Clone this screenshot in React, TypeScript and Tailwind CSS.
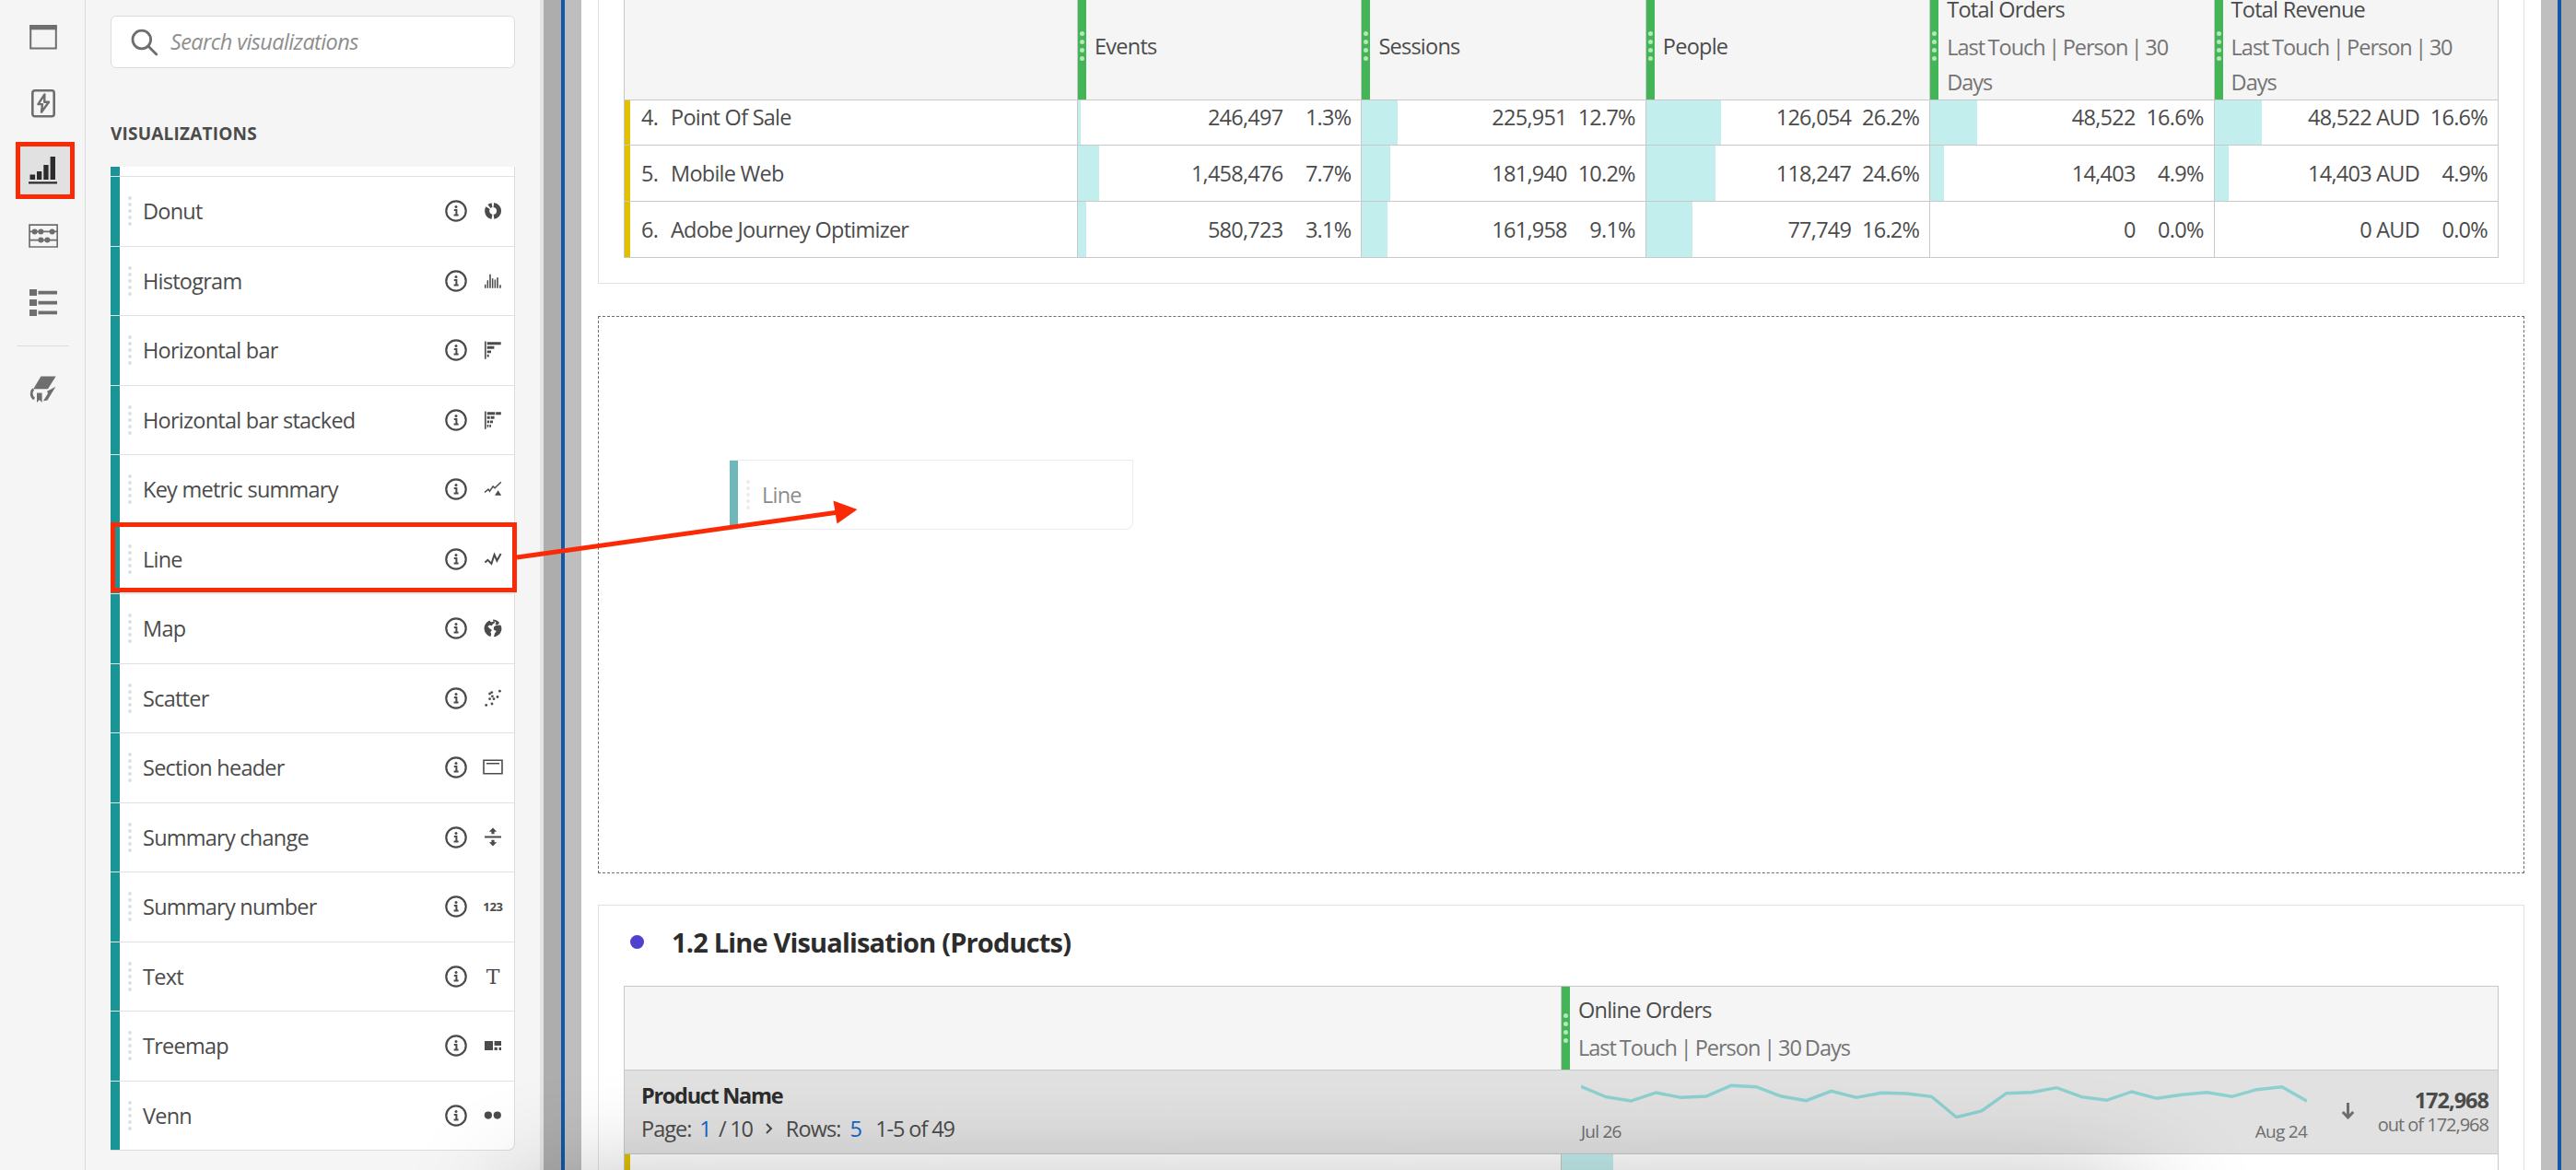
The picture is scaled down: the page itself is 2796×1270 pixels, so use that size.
import type { ReactNode } from 'react';

const InfoIcon = () => (
  <svg className="h-6 w-6 text-[#4b4b4b]" viewBox="0 0 24 24" fill="none" stroke="currentColor">
    <circle cx="12" cy="12" r="10.7" strokeWidth="2.2" />
    <circle cx="12" cy="7.4" r="1.5" fill="currentColor" stroke="none" />
    <path d="M9.8 11h2.6v5.4M9.6 16.6h5" strokeWidth="2" />
  </svg>
);

const VizIcon = ({ children }: { children: ReactNode }) => (
  <svg className="h-6 w-6 overflow-visible text-[#4b4b4b]" viewBox="0 0 24 24" fill="currentColor">
    {children}
  </svg>
);

const visualizations: { name: string; icon: ReactNode; active?: boolean }[] = [
  {
    name: 'Donut',
    icon: (
      <g fill="none" stroke="currentColor" strokeWidth="5">
        <path d="M12.9 5.6A6.4 6.4 0 0 1 13 18.3" />
        <path d="M11 18.3A6.4 6.4 0 0 1 6.6 8.6" />
        <path d="M8 7a6.4 6.4 0 0 1 3-1.4" />
      </g>
    ),
  },
  {
    name: 'Histogram',
    icon: (
      <path d="M3 15.8h1.5v4H3zM5.6 11.3h1.5v8.5H5.6zM8.2 4.8h1.6v15H8.2zM10.9 9.3h1.5v10.5h-1.5zM13.6 10.5h1.5v9.3h-1.5zM16.2 8.3h1.6v11.5h-1.6zM19.2 16.3h1.6v3.5h-1.6z" />
    ),
  },
  {
    name: 'Horizontal bar',
    icon: <path d="M3 2.5h1.6v19.3H3zM5.7 3.2h15v3h-15zM5.7 7.8h7.7v3H5.7zM5.7 12.5H10v2.7H5.7zM5.7 16.8h2v2.8h-2z" />,
  },
  {
    name: 'Horizontal bar stacked',
    icon: (
      <path d="M3 2.5h1.6v19.3H3zM5.7 3.2h8.6v3H5.7zM15.2 3.2h5.6v3h-5.6zM5.7 7.8h3v3h-3zM9.6 7.8h4v3h-4zM5.7 12.5h2.5v2.8H5.7zM9 12.5h3v2.8H9zM5.7 16.9h1.6v2.9H5.7zM8.3 16.9H10v2.9H8.3z" />
    ),
  },
  {
    name: 'Key metric summary',
    icon: (
      <>
        <path d="m3 15.5 4-3.4 1.5 2 3.6-5.2 2 1.8 6.7-6.4" fill="none" stroke="currentColor" strokeWidth="1.5" />
        <path d="m17.6 13.2 3.6 5.6H14z" />
      </>
    ),
  },
  {
    name: 'Line',
    icon: <path d="m3.4 15.6 3-2.8 4 4L13.6 7l2.8 6.6L20.6 6" fill="none" stroke="currentColor" strokeWidth="2" />,
    active: true,
  },
  {
    name: 'Map',
    icon: (
      <>
        <path d="M8.6 3.4C5 4.8 2.6 8.2 2.6 12c0 4.2 2.8 7.8 6.8 9l.8-2.6-.8-2.4 1.6-2-2.4-1.8-2.2-2.2 2-1.6 2.2.8 1.6-2 2-1.2-1-2-2 1.2-2-.4z" />
        <path d="M12 2.6c3 0 5.6 1.4 7.2 3.6l-2.2 2-2.4-.4.8-2.6-3.2-1.2zM20.4 8.4c1.4 2.8 1.4 5.6-.2 8.4-1.2 2-3 3.4-5.4 4.2l-1.8.2 1-3.6 1.8-2.6-3-1.4.2-3.2 2.6-1.6z" />
      </>
    ),
  },
  {
    name: 'Scatter',
    icon: (
      <>
        {[[4.7, 19.4], [11, 18], [8.6, 12.7], [13, 12.7], [8.6, 7], [10.8, 5.6], [11.4, 9.8], [17, 10.5], [19.4, 4.2]].map(
          ([x, y]) => (
            <circle key={`${x}-${y}`} cx={x} cy={y} r="1.4" />
          ),
        )}
      </>
    ),
  },
  {
    name: 'Section header',
    icon: <path d="M2 4.2h20v14.6H2zM5 7.8h14" fill="none" stroke="currentColor" strokeWidth="1.6" />,
  },
  {
    name: 'Summary change',
    icon: <path d="M3 10.6h18v2H3zM12 1.4l4.2 4.4h-2.6v2.4h-3.2V5.8H7.8zM12 21.6l4.2-4.4h-2.6v-2.4h-3.2v2.4H7.8z" />,
  },
  {
    name: 'Summary number',
    icon: (
      <text x="12" y="16.6" textAnchor="middle" className="font-['Noto_Sans'] text-[13px] font-bold tracking-[-0.2px]">
        123
      </text>
    ),
  },
  {
    name: 'Text',
    icon: (
      <text x="12" y="19.8" textAnchor="middle" className="font-['DejaVu_Serif'] text-[22px] tracking-normal">
        T
      </text>
    ),
  },
  {
    name: 'Treemap',
    icon: <path d="M3 7h9v10H3zM13.6 7h7.4v5h-7.4zM13.6 13.8h3.2V17h-3.2zM18.6 13.8H21V17h-2.4z" />,
  },
  {
    name: 'Venn',
    icon: (
      <>
        <circle cx="6.9" cy="11.6" r="4.1" />
        <circle cx="16.8" cy="11.6" r="4.1" />
      </>
    ),
  },
];

const metrics = [
  { name: 'Events' },
  { name: 'Sessions' },
  { name: 'People' },
  { name: 'Total Orders', model: 'Last Touch | Person | 30 Days' },
  { name: 'Total Revenue', model: 'Last Touch | Person | 30 Days' },
];

const rows = [
  {
    label: 'Point Of Sale',
    cells: [
      { value: '246,497', percent: '1.3%', bar: 3 },
      { value: '225,951', percent: '12.7%', bar: 39 },
      { value: '126,054', percent: '26.2%', bar: 81 },
      { value: '48,522', percent: '16.6%', bar: 51 },
      { value: '48,522 AUD', percent: '16.6%', bar: 51 },
    ],
  },
  {
    label: 'Mobile Web',
    cells: [
      { value: '1,458,476', percent: '7.7%', bar: 23 },
      { value: '181,940', percent: '10.2%', bar: 31 },
      { value: '118,247', percent: '24.6%', bar: 75 },
      { value: '14,403', percent: '4.9%', bar: 15 },
      { value: '14,403 AUD', percent: '4.9%', bar: 15 },
    ],
  },
  {
    label: 'Adobe Journey Optimizer',
    cells: [
      { value: '580,723', percent: '3.1%', bar: 9 },
      { value: '161,958', percent: '9.1%', bar: 28 },
      { value: '77,749', percent: '16.2%', bar: 50 },
      { value: '0', percent: '0.0%', bar: 0 },
      { value: '0 AUD', percent: '0.0%', bar: 0 },
    ],
  },
];

const trend = [
  17.3, 28.7, 33, 24, 29.3, 28, 16.3, 17.7, 28, 32.7, 22.3, 29.3, 24.3, 25, 28.3, 50.7, 44, 24.7, 23.7, 18.7, 28.7,
  32.3, 23, 30.3, 26.3, 23.7, 28.3, 20.7, 17.7, 33.3,
];

const DragDots = () => (
  <div className="flex w-1 flex-col gap-[3px]">
    {[0, 1, 2, 3, 4].map((i) => (
      <span key={i} className="h-1 w-1 rounded-full bg-[#dedede]" />
    ))}
  </div>
);

const MetricHandle = () => (
  <div className="flex w-[9px] shrink-0 flex-col items-center justify-center gap-1 bg-[#43b556]">
    {[0, 1, 2, 3].map((i) => (
      <span key={i} className="h-[5px] w-[5px] rounded-full bg-[#b4e6bb]" />
    ))}
  </div>
);

const Rail = () => (
  <nav className="flex w-[93px] shrink-0 flex-col items-center border-r border-[#dcdcdc] bg-[#f5f5f5] pl-[2px] text-[#6e6e6e]">
    <svg className="mt-[26px] h-7 w-[30px]" viewBox="0 0 30 28" fill="none" stroke="currentColor">
      <path d="M1.2 2h27.6v24.5H1.2z" strokeWidth="2" />
      <path d="M.2 3.8h29.6" strokeWidth="5" />
    </svg>
    <svg className="mt-[42px] h-8 w-[26px]" viewBox="0 0 26 32" fill="none" stroke="currentColor" strokeLinejoin="round">
      <rect x="1.3" y="2.3" width="23.4" height="28" rx="2.5" strokeWidth="2.6" />
      <path d="m14.4 6.5-7 10.6h4.6l-1 8.6 8-11h-4.8z" strokeWidth="2.4" />
    </svg>
    <div className="mr-[-4px] mt-[26px] flex h-[62px] w-16 justify-center border-[5px] border-[#fa2a06] bg-[#e1e1e1] text-[#2c2c2c]">
      <svg className="mr-[5px] mt-[11px] h-[30px] w-[31px]" viewBox="0 0 31 30" fill="currentColor">
        <path d="M0 27.2h31v2.2H0zM1.5 19.5h5.6v5.5H1.5zM9 16h5.3v9H9zM16.3 9h5.3v16h-5.3zM23.6 0h5.4v25h-5.4z" />
      </svg>
    </div>
    <svg className="mt-[27px] h-7 w-8" viewBox="0 0 32 28" fill="currentColor">
      <path d="M1 1.2h30.2v23.8H1zM1 8.4h30.2M1 17.6h30.2" fill="none" stroke="currentColor" strokeWidth="1.7" />
      <circle cx="6.6" cy="8.4" r="3" />
      <circle cx="13.4" cy="8.4" r="3" />
      <circle cx="25.6" cy="8.4" r="3" />
      <circle cx="13.4" cy="17.6" r="3" />
      <circle cx="20.4" cy="17.6" r="3" />
    </svg>
    <svg className="mt-[43px] h-[29px] w-[30px]" viewBox="0 0 30 29" fill="currentColor">
      <path d="M0 0h8v7H0zM0 11h8v7H0zM0 22h8v7H0zM9.5 1.8H30v3.6H9.5zM9.5 12.8H30v3.6H9.5zM9.5 23.6H30v3.6H9.5z" />
    </svg>
    <div className="mt-8 h-px w-14 bg-[#dcdcdc]" />
    <svg className="mt-8 h-[29px] w-[30px]" viewBox="0 0 30 29" fill="currentColor">
      <path d="M12.4.4h16.2L20 14.2H4.2z" />
      <path d="M4.2 14.2c-2.8 2.6-3 8.2 1 10.8" fill="none" stroke="currentColor" strokeWidth="2.8" />
      <path d="M8 18.6h5.6V29l-2.8-3-2.8 3zM19 16.8l9.4-5-9 14.8-4.4.6 5-8.2z" />
    </svg>
  </nav>
);

const Sidebar = () => (
  <aside className="flex w-[497px] shrink-0 flex-col border-r-[4px] border-[#e4e4e4] bg-[#f5f5f5] pl-[27px]">
    <div className="mt-[17px] flex h-[57px] w-[439px] items-center rounded-md border border-[#dcdcdc] bg-white pl-[21px] text-[#6e6e6e]">
      <svg className="h-[30px] w-[30px]" viewBox="0 0 30 30" fill="none" stroke="currentColor" strokeWidth="2.8">
        <circle cx="11.8" cy="12" r="9.8" />
        <path d="m18.8 19 9 9" strokeLinecap="round" />
      </svg>
      <span className="ml-[13px] italic tracking-[-0.6px] text-[#8e8e8e]">Search visualizations</span>
    </div>
    <h2 className="mt-[53px] h-9 text-[19px] font-bold leading-9 tracking-[0.2px] text-[#4b4b4b]">VISUALIZATIONS</h2>
    <div className="mt-[18px] w-[439px] rounded-br-lg border-b border-r border-[#dcdcdc] bg-white">
      <div className="h-[10px] w-[10px] bg-[#1b9497]" />
      {visualizations.map((viz) => (
        <div key={viz.name} className="relative flex h-[75.5px] items-center border-t border-[#e1e1e1]">
          <div className="mr-[9px] h-full w-[10px] bg-[#1b9497]" />
          <DragDots />
          <span className="ml-3 flex-1 pt-px">{viz.name}</span>
          <InfoIcon />
          <div className="ml-4 mr-[11px]">
            <VizIcon>{viz.icon}</VizIcon>
          </div>
          {viz.active && <div className="absolute -right-[3px] -top-[3px] bottom-[1px] left-0 border-[5px] border-[#fa2a06]" />}
        </div>
      ))}
    </div>
  </aside>
);

const ChannelTable = () => (
  <section className="h-[308px] overflow-hidden border-x border-b border-[#e1e1e1] pl-[27px] pr-[27px]">
    <div className="border-r border-[#c8c8c8]">
      <div className="relative z-10 -mt-[9px] grid h-[118px] grid-cols-[491px_repeat(5,minmax(0,1fr))] border-b border-l border-[#c8c8c8] bg-[#f5f5f5]">
        <div />
        {metrics.map((metric) => (
          <div key={metric.name} className="flex border-l border-[#c8c8c8]">
            <MetricHandle />
            <div className="flex flex-col justify-center gap-[3px] pl-[9px] pr-2 leading-[38px]">
              <div>{metric.name}</div>
              {metric.model && <div className="tracking-[-1px] text-[#747474] [word-spacing:-1.6px]">{metric.model}</div>}
            </div>
          </div>
        ))}
      </div>
      <div className="-mt-3">
        {rows.map((row, index) => (
          <div
            key={row.label}
            className="grid h-[61px] grid-cols-[491px_repeat(5,minmax(0,1fr))] border-b border-l border-[#c8c8c8]"
          >
            <div className="flex items-center border-l-[6px] border-[#e0c000] pl-[12px] pt-px">
              <span className="w-8">{index + 4}.</span>
              <span>{row.label}</span>
            </div>
            {row.cells.map((cell, i) => (
              <div key={i} className="relative flex items-center justify-end border-l border-[#c8c8c8] pr-[11px] pt-px">
                <div className="absolute inset-y-0 left-0 bg-[#c3eeee]" style={{ width: cell.bar }} />
                <span className="relative">{cell.value}</span>
                <span className="relative w-[74px] text-right">{cell.percent}</span>
              </div>
            ))}
          </div>
        ))}
      </div>
    </div>
  </section>
);

const DropZone = () => (
  <section className="mt-[35px] h-[605px] border border-dashed border-[#6e6e6e] pl-[142px] pt-[155px]">
    <div className="flex h-[76px] w-[438px] items-center rounded-br-lg border border-l-0 border-[#ececec] bg-white">
      <div className="mr-[9px] h-full w-[9px] bg-[#6fb7b8]" />
      <div className="opacity-60">
        <DragDots />
      </div>
      <span className="ml-[13px] pt-[2px] text-[#8c8c8c]">Line</span>
    </div>
  </section>
);

const ProductTable = () => (
  <section className="mt-[34px] h-[300px] border border-[#e1e1e1] px-[27px]">
    <div className="flex h-[87px] items-center pb-[8px] pl-[7px]">
      <span className="h-[15px] w-[15px] rounded-full bg-[#5040cf]" />
      <h3 className="ml-[30px] text-[29px] font-bold tracking-[-0.83px] text-[#2c2c2c]">1.2 Line Visualisation (Products)</h3>
    </div>
    <div className="border border-[#c8c8c8]">
      <div className="grid h-[91px] grid-cols-[1016px_1fr] border-b border-[#c8c8c8] bg-[#f5f5f5]">
        <div />
        <div className="flex border-l border-[#c8c8c8]">
          <MetricHandle />
          <div className="flex flex-col justify-center gap-[3px] pl-[9px] leading-[38px]">
            <div>Online Orders</div>
            <div className="tracking-[-1px] text-[#747474] [word-spacing:-1.2px]">Last Touch | Person | 30 Days</div>
          </div>
        </div>
      </div>
      <div className="grid h-[91px] grid-cols-[1016px_1fr] border-b border-[#c8c8c8] bg-[#e1e1e1]">
        <div className="flex flex-col justify-center pb-px pl-[18px] leading-9">
          <div className="font-bold tracking-[-1.3px] text-[#2c2c2c]">Product Name</div>
          <div className="flex items-center">
            <span className="tracking-[-1px]">Page:</span>
            <span className="ml-[9px] text-[#1464c8]">1</span>
            <span className="ml-[8px] tracking-[-1.2px]">/ 10</span>
            <svg className="ml-[13px] h-3 w-[9px]" viewBox="0 0 9 12" fill="none" stroke="currentColor" strokeWidth="2">
              <path d="m2 1 5 5-5 5" />
            </svg>
            <span className="ml-[14px] tracking-[-0.9px]">Rows:</span>
            <span className="ml-[10px] text-[#1464c8]">5</span>
            <span className="ml-[15px] tracking-[-1.1px]">1-5 of 49</span>
          </div>
        </div>
        <div className="flex pl-[22px]">
          <div className="flex w-[788px] flex-col">
            <svg className="h-[52px] w-[788px]" viewBox="0 0 788 52" fill="none">
              <polyline
                points={trend.map((y, i) => `${((i * 788) / 29).toFixed(1)},${y}`).join(' ')}
                stroke="#8dd0d0"
                strokeWidth="3.4"
              />
            </svg>
            <div className="flex justify-between text-[19px] leading-[28px] text-[#6e6e6e]">
              <span>Jul 26</span>
              <span>Aug 24</span>
            </div>
          </div>
          <svg className="ml-[37px] mt-[35px] h-[18px] w-[15px]" viewBox="0 0 15 18" fill="none" stroke="#6e6e6e" strokeWidth="3">
            <path d="M7.5 0v15.5M1.8 10l5.7 6 5.7-6" />
          </svg>
          <div className="flex flex-1 flex-col items-end pr-[10px] pt-[18px]">
            <span className="font-bold leading-[29px] tracking-[-1px]">172,968</span>
            <span className="text-[20px] leading-[24px] tracking-[-1px] text-[#6e6e6e]">out of 172,968</span>
          </div>
        </div>
      </div>
      <div className="grid h-10 grid-cols-[1016px_1fr]">
        <div className="border-l-[6px] border-[#e0c000]" />
        <div className="border-l border-[#c8c8c8]">
          <div className="h-full w-14 bg-[#c3eeee]" />
        </div>
      </div>
    </div>
  </section>
);

const App = () => {
  return (
    <main className="relative flex h-[1270px] w-[2796px] overflow-hidden bg-white font-['Open_Sans','Noto_Sans',sans-serif] text-[23.5px] tracking-[-0.75px] text-[#4b4b4b]">
      <Rail />
      <Sidebar />
      <div className="w-[19px] shrink-0 bg-[#adadad]" />
      <div className="w-[4px] shrink-0 bg-[#1357a6]" />
      <div className="w-[18px] shrink-0 bg-[#bebebe]" />
      <div className="min-w-0 flex-1 px-[18px]">
        <ChannelTable />
        <DropZone />
        <ProductTable />
      </div>
      <div className="w-[18px] shrink-0 bg-[#bfbfbf]" />
      <div className="w-[4px] shrink-0 bg-[#1357a6]" />
      <div className="w-[16px] shrink-0 bg-[#a9a9a9]" />

      {/* soft shadow rising from the bottom edge */}
      <div className="absolute left-[570px] top-[1310px] h-[200px] w-[1750px] shadow-[0_0_130px_rgba(0,0,0,0.45)]" />

      {/* drag arrow */}
      <svg className="absolute left-[560px] top-[540px] h-[70px] w-[374px]" viewBox="0 0 374 70">
        <path d="M1 65 350 16" stroke="#fa2a06" strokeWidth="5" />
        <path d="m344.5 3.5 26 9.5-22 15.5z" fill="#fa2a06" />
      </svg>
    </main>
  );
};

export default App;
